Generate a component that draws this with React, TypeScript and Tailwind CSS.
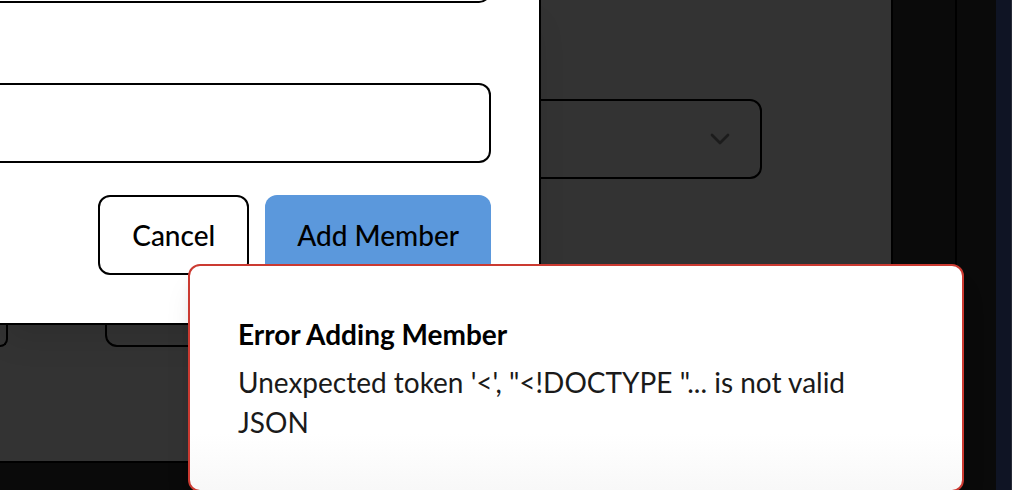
import { ChevronDown } from "lucide-react";

function SettingsPanel() {
  return (
    <div className="flex min-h-screen bg-[#0f1424]">
      <div className="flex flex-1 bg-[#0a0a0a]">
        <div className="flex-1 border-r-2 border-black pr-[62px]">
          <section className="flex h-[463px] flex-col items-end border-r-2 border-b-2 border-black bg-[#333333] pt-[99px] pr-[129px]">
            <button
              type="button"
              aria-label="Role"
              className="flex h-20 w-80 items-center justify-end rounded-xl border-2 border-black pr-6"
            >
              <ChevronDown className="size-8 text-[#1c1c1c]" strokeWidth={2} />
            </button>
            <div className="mt-[88px] flex w-[762px] gap-[97px]">
              <div className="h-20 w-2 rounded-br-xl border-r-2 border-b-2 border-black" />
              <div className="h-20 w-60 rounded-xl border-2 border-black" />
            </div>
          </section>
        </div>
        <div className="w-[39px]" />
      </div>
      <div className="w-4 border-r border-[#272b38]" />
    </div>
  );
}

function MemberDialog() {
  return (
    <div
      role="dialog"
      aria-label="Add Member"
      className="absolute top-0 right-[471px] left-0 overflow-hidden border-r-2 border-b-2 border-black bg-white pr-12 pb-12 shadow-[0_20px_30px_-6px_rgba(0,0,0,0.1)]"
    >
      <form className="flex flex-col" onSubmit={(e) => e.preventDefault()}>
        <input
          type="text"
          aria-label="Name"
          className="-mt-[77px] h-20 w-full rounded-r-xl border-2 border-l-0 border-black bg-white px-6 text-[28px] outline-none"
        />
        <input
          type="text"
          aria-label="Member"
          className="mt-20 h-20 w-full rounded-r-xl border-2 border-l-0 border-black bg-white px-6 text-[28px] outline-none"
        />
        <div className="mt-8 flex justify-end gap-4">
          <button
            type="button"
            className="h-20 rounded-xl border-2 border-black bg-white px-8 text-[28px] leading-10 font-medium text-black"
          >
            Cancel
          </button>
          <button
            type="submit"
            className="h-20 rounded-xl bg-[#5b98dc] px-8 text-[28px] leading-10 font-medium text-black"
          >
            Add Member
          </button>
        </div>
      </form>
    </div>
  );
}

function ErrorToast() {
  return (
    <div
      role="alert"
      className="absolute top-[264px] right-12 w-[776px] rounded-xl border-2 border-[#cb3a31] bg-linear-to-b from-white from-75% to-[#f8f8f8] p-12 shadow-[0_20px_30px_-6px_rgba(0,0,0,0.1),0_8px_12px_-4px_rgba(0,0,0,0.1)]"
    >
      <div className="text-[28px] leading-10 font-bold text-black">Error Adding Member</div>
      <div className="mt-2 text-[28px] leading-10 text-[#1a1a1a]">
        Unexpected token '&lt;', "&lt;!DOCTYPE "... is not valid JSON
      </div>
    </div>
  );
}

export default function App() {
  return (
    <main className="relative h-screen overflow-hidden font-['Lato',sans-serif]">
      <SettingsPanel />
      <MemberDialog />
      <ErrorToast />
    </main>
  );
}
